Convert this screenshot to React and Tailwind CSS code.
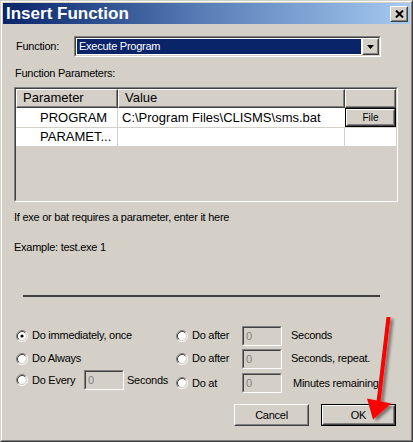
import React from 'react';

const Sunken = ({ className = '', inner = '', children }) => (
  <div className={`border border-t-[#808080] border-l-[#808080] border-r-white border-b-white ${className}`}>
    <div className={`h-full w-full border border-t-[#404040] border-l-[#404040] border-r-[#d4d0c8] border-b-[#d4d0c8] ${inner}`}>
      {children}
    </div>
  </div>
);

const Raised = ({ className = '', inner = '', children }) => (
  <div className={`border border-t-white border-l-white border-r-[#404040] border-b-[#404040] ${className}`}>
    <div className={`h-full w-full border border-t-[#d4d0c8] border-l-[#d4d0c8] border-r-[#808080] border-b-[#808080] bg-[#d4d0c8] ${inner}`}>
      {children}
    </div>
  </div>
);

const Radio = ({ checked }) => (
  <svg width="12" height="12" viewBox="0 0 12 12" className="shrink-0">
    <circle cx="6" cy="6" r="4" fill="#fff" />
    <path d="M2.11 9.89 A5.5 5.5 0 0 1 9.89 2.11" stroke="#808080" fill="none" />
    <path d="M9.89 2.11 A5.5 5.5 0 0 1 2.11 9.89" stroke="#fff" fill="none" />
    <path d="M2.82 9.18 A4.5 4.5 0 0 1 9.18 2.82" stroke="#404040" fill="none" />
    <path d="M9.18 2.82 A4.5 4.5 0 0 1 2.82 9.18" stroke="#d4d0c8" fill="none" />
    {checked && <circle cx="6" cy="6" r="1.6" fill="#000" />}
  </svg>
);

const NumBox = () => (
  <Sunken className="w-[40px] h-[20px] shrink-0" inner="bg-[#d4d0c8] pl-[2px] text-[#808080] leading-[16px]">
    0
  </Sunken>
);

const Option = ({ label, checked, width }) => (
  <div className="flex items-center">
    <Radio checked={checked} />
    <span className={`ml-[4px] ${width}`}>{label}</span>
  </div>
);

export default function App() {
  return (
    <div className="relative w-[413px] h-[442px] font-['Liberation_Sans',Arial,sans-serif] text-[11px] tracking-[-0.25px] text-black">
      <div className="h-full border border-t-[#d4d0c8] border-l-[#d4d0c8] border-r-[#404040] border-b-[#404040]">
        <div className="h-full border border-t-white border-l-white border-r-[#808080] border-b-[#808080] bg-[#d4d0c8] p-px flex flex-col">
          {/* title bar */}
          <div className="h-[21px] shrink-0 flex items-center justify-between pl-[3px] pr-[2px] bg-linear-to-r from-[#0a246a] via-[#5a7fb8] to-[#a6caf0]">
            <span className="text-white font-bold text-[17px] tracking-normal leading-none">Insert Function</span>
            <Raised className="w-[18px] h-[16px]" inner="flex items-center justify-center">
              <svg width="9" height="8" viewBox="0 0 9 8">
                <path d="M1 0.5 L8 7.5 M8 0.5 L1 7.5" stroke="#000" strokeWidth="2" />
              </svg>
            </Raised>
          </div>

          {/* function select */}
          <div className="mt-[12px] flex items-center h-[21px]">
            <span className="pl-[13px] w-[71px]">Function:</span>
            <Sunken className="w-[307px] h-[21px]" inner="bg-white flex">
              <div className="flex-1 p-px">
                <div className="h-full bg-[#0a246a] text-white pl-[2px] leading-[15px]">Execute Program</div>
              </div>
              <Raised className="w-[17px] h-full" inner="flex items-center justify-center">
                <svg width="7" height="4" viewBox="0 0 7 4">
                  <path d="M0 0 H7 L3.5 4 Z" fill="#000" />
                </svg>
              </Raised>
            </Sunken>
          </div>

          <div className="mt-[9px] pl-[12px] leading-[14px]">Function Parameters:</div>

          {/* parameter grid */}
          <Sunken className="mt-[7px] ml-[11px] w-[384px] h-[115px]" inner="bg-[#d4d0c8] text-[13px] tracking-normal">
            <div className="flex h-[19px]">
              {[
                ['Parameter', 'w-[102px]'],
                ['Value', 'w-[227px]'],
                ['', 'flex-1'],
              ].map(([t, w], i) => (
                <div key={i} className={`${w} border border-t-white border-l-white border-r-[#404040] border-b-[#404040]`}>
                  <div className="h-full border-r border-b border-[#808080] pl-[6px] leading-[16px]">{t}</div>
                </div>
              ))}
            </div>
            <div className="flex h-[20px] bg-white border-b border-[#d4d0c8]">
              <div className="w-[102px] border-r border-[#d4d0c8] pl-[24px] leading-[19px]">PROGRAM</div>
              <div className="w-[227px] pl-[4px] leading-[19px]">C:\Program Files\CLISMS\sms.bat</div>
              <div className="flex-1 border border-black">
                <Raised className="h-full" inner="text-[10px] flex items-center justify-center">File</Raised>
              </div>
            </div>
            <div className="flex h-[19px] bg-white border-b border-[#d4d0c8]">
              <div className="w-[102px] border-r border-[#d4d0c8] pl-[24px] leading-[18px]">PARAMET...</div>
              <div className="w-[227px] border-r border-[#d4d0c8]"></div>
              <div className="flex-1"></div>
            </div>
          </Sunken>

          <div className="mt-[8px] ml-[11px] leading-[14px]">If exe or bat requires a parameter, enter it here</div>
          <div className="mt-[16px] ml-[11px] leading-[14px]">Example: test.exe 1</div>

          <div className="mt-[41px] ml-[20px] w-[357px] h-[2px] bg-[#404040]"></div>

          {/* schedule options */}
          <div className="mt-[27px] ml-[13px] grid grid-cols-[160px_1fr] grid-rows-[23px_23px_23px]">
            <div className="flex items-center">
              <Option label="Do immediately, once" checked />
            </div>
            <div className="flex items-center">
              <Option label="Do after" width="w-[50px]" />
              <NumBox />
              <span className="ml-[9px]">Seconds</span>
            </div>
            <div className="flex items-center">
              <Option label="Do Always" />
            </div>
            <div className="flex items-center">
              <Option label="Do after" width="w-[50px]" />
              <NumBox />
              <span className="ml-[9px]">Seconds, repeat.</span>
            </div>
            <div className="flex items-center h-[20px]">
              <Option label="Do Every" width="w-[52px]" />
              <NumBox />
              <span className="ml-[3px]">Seconds</span>
            </div>
            <div className="flex items-center pt-[3px]">
              <Option label="Do at" width="w-[50px]" />
              <NumBox />
              <span className="ml-[11px]">Minutes remaining</span>
            </div>
          </div>

          {/* buttons */}
          <div className="mt-[11px] ml-[231px] flex gap-[12px]">
            <Raised className="w-[75px] h-[22px]" inner="flex items-center justify-center">Cancel</Raised>
            <div className="w-[75px] h-[22px] border border-black">
              <Raised className="h-full" inner="flex items-center justify-center">OK</Raised>
            </div>
          </div>
        </div>
      </div>

      {/* red annotation arrow */}
      <svg className="absolute inset-0 pointer-events-none" width="413" height="442" viewBox="0 0 413 442">
        <defs>
          <filter id="shadow" x="-20%" y="-20%" width="160%" height="160%">
            <feDropShadow dx="3" dy="2" stdDeviation="1.5" floodColor="#000" floodOpacity="0.45" />
          </filter>
        </defs>
        <g filter="url(#shadow)" fill="#ff0000">
          <polygon points="386.5,317 390.5,317 380.5,402 376.5,402" />
          <polygon points="367,398.5 391,403.5 373,419.5" />
        </g>
      </svg>
    </div>
  );
}
